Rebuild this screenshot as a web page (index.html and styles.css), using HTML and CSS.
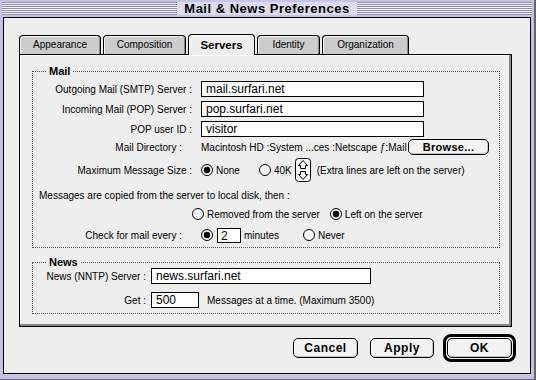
FILE: index.html
```html
<!DOCTYPE html>
<html lang="en">
<head>
  <meta charset="UTF-8">
  <meta name="viewport" content="width=device-width, initial-scale=1.0">
  <title>Mail &amp; News Preferences</title>
  <link rel="stylesheet" href="styles.css">
</head>
<body>

<div class="window">
  <div class="titlebar">
    <div class="stripes"><span class="title">Mail &amp; News Preferences</span></div>
  </div>

  <div class="frame">
    <div class="tabs">
      <div class="tab appearance">Appearance</div>
      <div class="tab composition">Composition</div>
      <div class="tab servers active">Servers</div>
      <div class="tab identity">Identity</div>
      <div class="tab organization">Organization</div>
    </div>

    <div class="panel">
      <fieldset class="group mail">
        <legend>Mail</legend>
        <div class="row first">
          <span class="label">Outgoing Mail (SMTP) Server :</span>
          <span class="input server">mail.surfari.net</span>
        </div>
        <div class="row">
          <span class="label">Incoming Mail (POP) Server :</span>
          <span class="input server">pop.surfari.net</span>
        </div>
        <div class="row">
          <span class="label">POP user ID :</span>
          <span class="input server">visitor</span>
        </div>
        <div class="row dir-row">
          <span class="label short">Mail Directory :</span>
          <span class="path">Macintosh HD :System ...ces :Netscape ƒ:Mail</span>
          <span class="btn browse">Browse...</span>
        </div>
        <div class="row size-row">
          <span class="label">Maximum Message Size :</span>
          <span class="radio"><svg width="12" height="12" viewBox="0 0 12 12"><circle cx="6" cy="6" r="5.5" fill="#fafafa" stroke="#000"/><circle cx="6" cy="6" r="3.2" fill="#000"/></svg>None</span>
          <span class="radio k40"><svg width="12" height="12" viewBox="0 0 12 12"><circle cx="6" cy="6" r="5.5" fill="#fafafa" stroke="#000"/></svg>40K</span>
          <svg class="stepper" width="16" height="24" viewBox="0 0 16 24">
            <rect x="0.5" y="0.5" width="15" height="23" rx="3" fill="#fafafa" stroke="#000"/>
            <path d="M8 2.5 L12.5 7.5 L10.5 7.5 L10.5 10.5 L5.5 10.5 L5.5 7.5 L3.5 7.5 Z" fill="none" stroke="#000"/>
            <path d="M8 21.5 L12.5 16.5 L10.5 16.5 L10.5 13.5 L5.5 13.5 L5.5 16.5 L3.5 16.5 Z" fill="none" stroke="#000"/>
          </svg>
          <span class="hint">(Extra lines are left on the server)</span>
        </div>
        <div class="row note-row">
          <span class="note">Messages are copied from the server to local disk, then :</span>
        </div>
        <div class="row choice-row">
          <span class="radio"><svg width="12" height="12" viewBox="0 0 12 12"><circle cx="6" cy="6" r="5.5" fill="#fafafa" stroke="#000"/></svg>Removed from the server</span>
          <span class="radio left-on"><svg width="12" height="12" viewBox="0 0 12 12"><circle cx="6" cy="6" r="5.5" fill="#fafafa" stroke="#000"/><circle cx="6" cy="6" r="3.2" fill="#000"/></svg>Left on the server</span>
        </div>
        <div class="row check-row">
          <span class="label short">Check for mail every :</span>
          <span class="radio"><svg width="12" height="12" viewBox="0 0 12 12"><circle cx="6" cy="6" r="5.5" fill="#fafafa" stroke="#000"/><circle cx="6" cy="6" r="3.2" fill="#000"/></svg></span>
          <span class="input minutes">2</span>
          <span class="unit">minutes</span>
          <span class="radio never"><svg width="12" height="12" viewBox="0 0 12 12"><circle cx="6" cy="6" r="5.5" fill="#fafafa" stroke="#000"/></svg>Never</span>
        </div>
      </fieldset>

      <fieldset class="group news">
        <legend>News</legend>
        <div class="row">
          <span class="label">News (NNTP) Server :</span>
          <span class="input nntp">news.surfari.net</span>
        </div>
        <div class="row get-row">
          <span class="label">Get :</span>
          <span class="input count">500</span>
          <span class="hint">Messages at a time. (Maximum 3500)</span>
        </div>
      </fieldset>
    </div>

    <div class="buttons">
      <span class="btn cancel">Cancel</span>
      <span class="btn apply">Apply</span>
      <span class="default-ring"><span class="btn ok">OK</span></span>
    </div>
  </div>
</div>

</body>
</html>
```

FILE: styles.css
```css
body {
  margin: 0;
  background: #c4c4e8;
  font-family: "Liberation Sans", Arial, sans-serif;
  font-size: 10px;
  color: #000;
}
.window {
  width: 536px;
  height: 380px;
  background: #c4c4e8;
  overflow: hidden;
  box-shadow: inset -2px -1px 0 #666;
}
.titlebar {
  height: 17px;
  padding: 2px 4px 2px 2px;
  box-sizing: border-box;
}
.stripes {
  height: 13px;
  background: repeating-linear-gradient(to bottom, #8e8ea4 0 1px, #f2f2fa 1px 2px);
  display: flex;
  justify-content: center;
  align-items: center;
}
.title {
  background: #dcdcee;
  padding: 0 7px;
  height: 13px;
  line-height: 13px;
  font-weight: bold;
  font-size: 13px;
  letter-spacing: 0.5px;
}
.frame {
  margin-left: 3px;
  width: 528px;
  height: 357px;
  box-sizing: border-box;
  border: 1px solid #000;
  background: #eeeeee;
}

/* tabs */
.tabs {
  display: flex;
  align-items: flex-end;
  gap: 2px;
  height: 20px;
  margin-top: 16px;
  padding-left: 15px;
}
.tab {
  height: 19px;
  line-height: 18px;
  box-sizing: border-box;
  text-align: center;
  border: 1px solid #000;
  border-bottom: none;
  border-radius: 4px 4px 0 0;
  background: #cccccc;
  box-shadow: inset 1px 1px 0 #f4f4f4, inset -1px 0 0 #888;
  font-size: 10px;
}
.appearance { width: 82px; }
.composition { width: 83px; }
.servers { width: 67px; }
.identity { width: 63px; }
.organization { width: 87px; }
.tab.active {
  position: relative;
  height: 21px;
  margin-bottom: -1px;
  line-height: 20px;
  background: #eeeeee;
  box-shadow: inset 1px 1px 0 #fff;
  font-weight: bold;
  font-size: 11.5px;
}

/* panel */
.panel {
  margin-left: 15px;
  width: 493px;
  height: 273px;
  box-sizing: border-box;
  border: 1px solid #000;
  background: #eeeeee;
  box-shadow: inset -2px -2px 0 #888, inset 1px 1px 0 #fff;
  padding: 10px 0 0 12px;
}
.group {
  margin: 0;
  padding: 0;
  width: 468px;
  box-sizing: border-box;
  border: 1px dotted #555;
}
.group legend {
  margin-left: 13px;
  padding: 0 3px;
  line-height: 12px;
  font-weight: bold;
  font-size: 11px;
}
.news {
  margin-top: 8px;
}
.row {
  display: flex;
  align-items: center;
  height: 20px;
  white-space: nowrap;
}
.mail .first {
  margin-top: 2px;
}
.label {
  width: 159px;
  margin-right: 9px;
  text-align: right;
  flex-shrink: 0;
}
.label.short {
  box-sizing: border-box;
  padding-right: 10px;
}
.input {
  height: 16px;
  line-height: 14px;
  box-sizing: border-box;
  border: 1px solid #000;
  background: #fff;
  padding-left: 4px;
  font-size: 12px;
}
.server {
  width: 223px;
}
.dir-row {
  height: 16px;
}
.path {
  flex: 1;
  overflow: hidden;
}
.btn {
  display: flex;
  align-items: center;
  justify-content: center;
  height: 20px;
  box-sizing: border-box;
  border: 1px solid #000;
  border-radius: 5px;
  background: #f2f2f2;
  box-shadow: inset 1px 1px 0 #fff, inset -1px -1px 0 #c4c4c4;
  font-weight: bold;
  font-size: 12px;
  letter-spacing: 0.5px;
}
.browse {
  width: 81px;
  height: 16px;
  margin-right: 10px;
  font-size: 11px;
  letter-spacing: 0.3px;
}
.size-row {
  height: 26px;
  margin-top: 2px;
}
.radio {
  display: flex;
  align-items: center;
  gap: 3px;
}
.k40 {
  margin-left: 19px;
}
.stepper {
  margin-left: 3px;
}
.size-row .hint {
  margin-left: 6px;
}
.note-row {
  margin-top: 2px;
}
.note {
  padding-left: 6px;
}
.choice-row {
  height: 18px;
  padding-left: 159px;
}
.left-on {
  margin-left: 10px;
}
.check-row {
  margin: 2px 0;
}
.minutes {
  width: 24px;
  height: 15px;
  margin-left: 4px;
  padding-left: 3px;
}
.unit {
  margin-left: 3px;
}
.never {
  margin-left: 24px;
}
.news .row {
  height: 16px;
}
.news .label {
  width: 113px;
  margin-right: 5px;
}
.news .get-row {
  margin: 8px 0 5px;
}
.nntp {
  width: 220px;
}
.count {
  width: 48px;
}
.get-row .hint {
  margin-left: 8px;
}

/* bottom buttons */
.buttons {
  display: flex;
  justify-content: flex-end;
  align-items: center;
  height: 30px;
  margin-top: 6px;
  padding-right: 14px;
}
.cancel {
  width: 65px;
}
.apply {
  width: 64px;
  margin-left: 12px;
}
.default-ring {
  margin-left: 9px;
  padding: 1px;
  border: 3px solid #000;
  border-radius: 8px;
}
.ok {
  width: 65px;
}
```
